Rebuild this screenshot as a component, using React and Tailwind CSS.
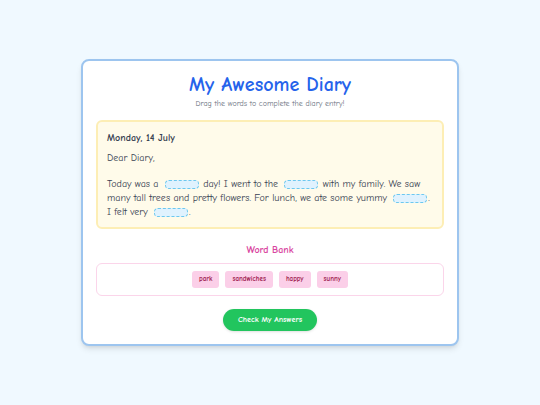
const words = ["park", "sandwiches", "happy", "sunny"];

function Blank({ label }) {
  return (
    <span
      role="img"
      aria-label={label}
      className="mr-px ml-[3px] inline-block h-[9px] w-[34px] rounded border border-dashed border-[#6cc8ef] bg-[#e0f2fe] align-middle"
    />
  );
}

export default function App() {
  return (
    <main className="flex min-h-screen items-center justify-center bg-[#f0f9ff] p-4 font-['Comic_Neue','Comic_Sans_MS',Lato,sans-serif]">
      <div className="w-full max-w-[378px] rounded-lg border-2 border-[#9dc5ef] bg-white px-[13px] pt-3 pb-[13px] shadow-md">
        <header className="text-center">
          <h1 className="text-[20px] leading-6 font-bold text-[#2563eb]">My Awesome Diary</h1>
          <p className="text-[8px] leading-[14px] text-[#6b7280]">Drag the words to complete the diary entry!</p>
        </header>

        <section className="mt-[9px] rounded-md border-2 border-[#fdeeb5] bg-[#fffbea] px-[9px] pt-[10px] pb-2 text-[10px] leading-[14px] text-[#374151]">
          <h2 className="text-[10px] leading-3 font-bold">Monday, 14 July</h2>
          <p className="mt-[7px]">Dear Diary,</p>
          <p className="mt-3">
            Today was a <Blank label="first missing word" /> day! I went to the{" "}
            <Blank label="second missing word" /> with my family. We saw many tall trees and pretty
            flowers. For lunch, we ate some yummy{" "}
            <span className="whitespace-nowrap"><Blank label="third missing word" />.</span> I felt very{" "}
            <span className="whitespace-nowrap"><Blank label="fourth missing word" />.</span>
          </p>
        </section>

        <section className="mt-[14px]">
          <h2 className="text-center text-[10px] leading-[14px] font-bold text-[#d946a0]">Word Bank</h2>
          <div className="mt-[6px] flex flex-wrap justify-center gap-[6px] rounded-md border border-[#fbd5ea] p-[7px]">
            {words.map((word) => (
              <button
                key={word}
                type="button"
                draggable
                className="h-[17px] cursor-grab rounded-[3px] bg-[#fbcfe8] px-[7px] text-[7px] leading-[17px] font-bold text-[#9d174d]"
              >
                {word}
              </button>
            ))}
          </div>
        </section>

        <div className="mt-[13px] flex justify-center">
          <button
            type="button"
            className="h-[22px] rounded-full bg-[#22c55e] px-[15px] text-[8px] leading-[22px] font-bold text-white shadow-sm"
          >
            Check My Answers
          </button>
        </div>
      </div>
    </main>
  );
}
